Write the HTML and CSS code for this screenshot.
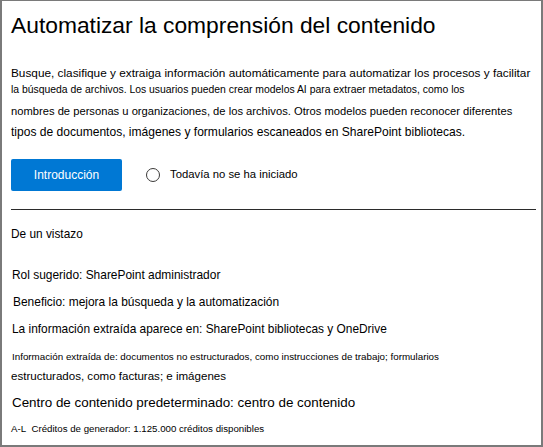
FILE: index.html
```html
<!DOCTYPE html>
<html lang="es">
<head>
<meta charset="utf-8">
<link rel="stylesheet" href="styles.css">
</head>
<body>
<main class="panel">
  <h1 class="title">Automatizar la comprensión del contenido</h1>
  <div class="intro">
    <div class="p1">Busque, clasifique y extraiga información automáticamente para automatizar los procesos y facilitar</div>
    <div class="p2">la búsqueda de archivos. Los usuarios pueden crear modelos AI para extraer metadatos, como los</div>
    <div class="p3">nombres de personas u organizaciones, de los archivos. Otros modelos pueden reconocer diferentes</div>
    <div class="p4">tipos de documentos, imágenes y formularios escaneados en SharePoint bibliotecas.</div>
  </div>
  <div class="actions">
    <button class="btn">Introducción</button>
    <span class="radio"></span>
    <span class="status">Todavía no se ha iniciado</span>
  </div>
  <hr class="divider">
  <div class="glance">De un vistazo</div>
  <div class="facts">
    <div class="row r-rol">Rol sugerido: SharePoint administrador</div>
    <div class="row r-ben">Beneficio: mejora la búsqueda y la automatización</div>
    <div class="row r-info">La información extraída aparece en: SharePoint bibliotecas y OneDrive</div>
    <div class="row r-src">Información extraída de: documentos no estructurados, como instrucciones de trabajo; formularios</div>
    <div class="r-src2">estructurados, como facturas; e imágenes</div>
    <div class="r-center">Centro de contenido predeterminado: centro de contenido</div>
    <div class="r-credits">A-L&nbsp; Créditos de generador: 1.125.000 créditos disponibles</div>
  </div>
</main>
</body>
</html>
```
FILE: styles.css
```css
html, body {
  margin: 0;
  padding: 0;
  background: #ffffff;
}
body {
  font-family: "Liberation Sans", Arial, sans-serif;
  color: #000000;
}
.panel {
  box-sizing: border-box;
  width: 543px;
  height: 447px;
  border: 2px solid #7a7a7a;
  border-top-width: 1px;
  padding: 9px 5px 0 9px;
  overflow: hidden;
}
.title {
  margin: 0;
  font-size: 22.8px;
  font-weight: normal;
  line-height: 30px;
  white-space: nowrap;
}
.intro {
  margin-top: 24px;
  white-space: nowrap;
}
.p1 { font-size: 11.8px; line-height: 18px; }
.p2 { font-size: 10.4px; line-height: 16px; }
.p3 { font-size: 11.2px; line-height: 26px; }
.p4 { font-size: 12.05px; line-height: 16px; }
.actions {
  margin-top: 19px;
  display: flex;
  align-items: center;
  height: 32px;
}
.btn {
  width: 111px;
  height: 32px;
  border: none;
  border-radius: 2px;
  background: #0078d4;
  color: #ffffff;
  font-family: inherit;
  font-size: 12px;
  padding: 0;
}
.radio {
  box-sizing: border-box;
  width: 14px;
  height: 14px;
  border: 1px solid #3b3a39;
  border-radius: 50%;
  margin-left: 24px;
}
.status {
  margin-left: 10px;
  font-size: 11.3px;
  margin-top: -3px;
}
.divider {
  margin: 18px 0 0 0;
  border: none;
  height: 1px;
  background: #2b2b2b;
}
.glance {
  margin-top: 14px;
  font-size: 11.85px;
  line-height: 20px;
}
.facts {
  margin-top: 18px;
  white-space: nowrap;
}
.row {
  line-height: 27px;
  font-size: 11.95px;
}
.r-rol { margin-left: 1px; }
.r-ben { margin-left: 2px; }
.r-info { margin-left: 1px; font-size: 11.9px; }
.r-src { margin-left: 1px; font-size: 9.8px; }
.r-src2 { font-size: 11.55px; line-height: 12px; }
.r-center { margin-left: 1px; font-size: 13.4px; line-height: 42px; }
.r-credits { font-size: 9.7px; line-height: 10px; }
```
